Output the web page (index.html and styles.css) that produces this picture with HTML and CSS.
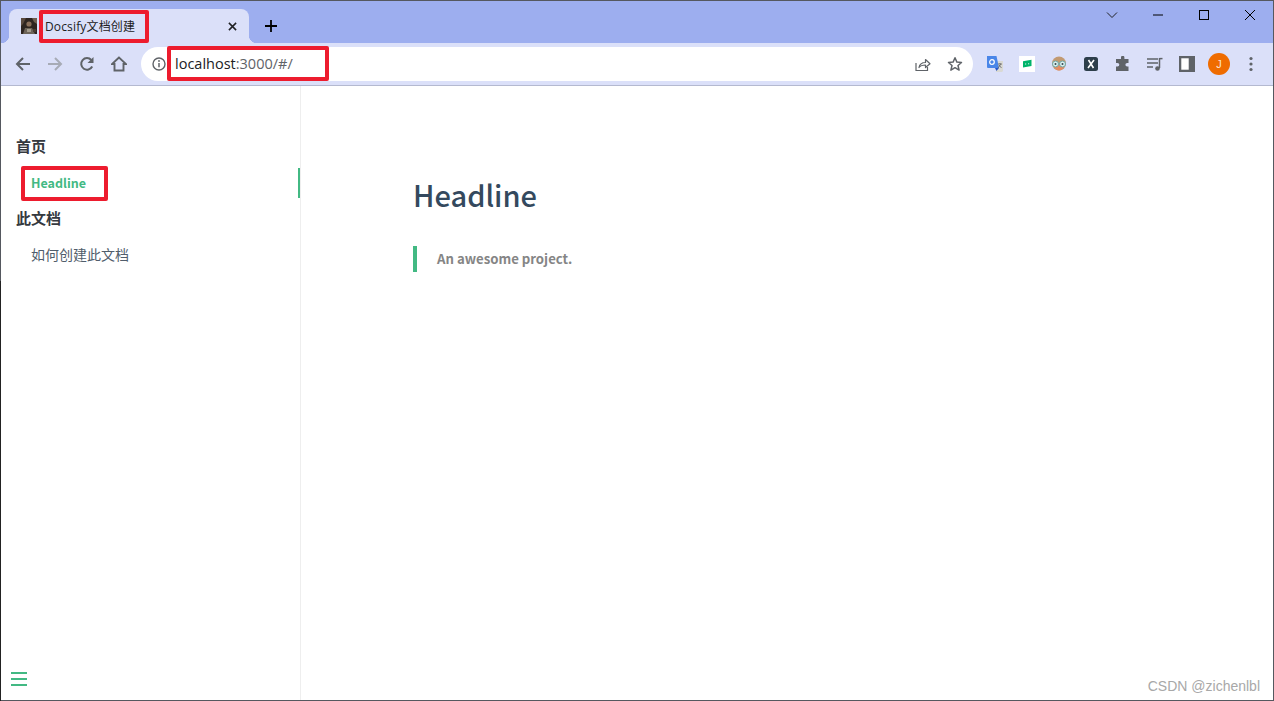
FILE: index.html
```html
<!DOCTYPE html>
<html lang="zh">
<head>
<meta charset="utf-8">
<title>Docsify文档创建</title>
<link rel="stylesheet" href="styles.css">
</head>
<body>
<div class="window">
  <header class="tabstrip">
    <div class="tab">
      <svg class="favicon" viewBox="0 0 16 16"><rect width="16" height="16" fill="#2e2520"/><path d="M0 0h5L2 6 0 8z" fill="#5a4a3e"/><path d="M11 0h5v6l-3-2z" fill="#6f5f50"/><circle cx="8" cy="6" r="2.600" fill="#8a6f5a"/><path d="M2 16l2-6h7l3 6z" fill="#6c6358"/><path d="M6 11h4v3H6z" fill="#a39b8c"/><path d="M12 11h3v3h-3z" fill="#4a3c32"/></svg>
      <span class="tab-title">Docsify文档创建</span>
      <svg class="tab-close" viewBox="0 0 10 10"><path d="M1 1l8 8M9 1l-8 8" stroke="#202124" stroke-width="1.7" fill="none"/></svg>
    </div>
    <svg class="newtab" viewBox="0 0 12 12"><path d="M6 0v12M0 6h12" stroke="#000" stroke-width="1.8" fill="none"/></svg>
    <div class="win-controls">
      <svg class="win-btn win-chevron" viewBox="0 0 12 12"><path d="M1 3.500l5 5 5-5" stroke="#202124" stroke-width="1" fill="none"/></svg>
      <svg class="win-btn win-min" viewBox="0 0 12 12"><path d="M1 6h10" stroke="#000" stroke-width="1" fill="none"/></svg>
      <svg class="win-btn win-max" viewBox="0 0 12 12"><rect x="1.500" y="1.500" width="9" height="9" stroke="#000" stroke-width="1" fill="none"/></svg>
      <svg class="win-btn win-close" viewBox="0 0 12 12"><path d="M1 1l10 10M11 1L1 11" stroke="#000" stroke-width="1" fill="none"/></svg>
    </div>
  </header>

  <nav class="toolbar">
    <div class="nav-btn"><svg viewBox="0 0 16 16"><path d="M15 8H2M8 2L2 8l6 6" stroke="#5f6368" stroke-width="2" fill="none"/></svg></div>
    <div class="nav-btn"><svg viewBox="0 0 16 16"><path d="M1 8h13M8 2l6 6-6 6" stroke="#a7abb6" stroke-width="2" fill="none"/></svg></div>
    <div class="nav-btn"><svg viewBox="0 0 16 16"><path d="M13.200 10.500A5.800 5.800 0 1 1 12.300 4" stroke="#5f6368" stroke-width="2" fill="none"/><path d="M14.500 1v6h-6z" fill="#5f6368"/></svg></div>
    <div class="nav-btn"><svg viewBox="0 0 16 16"><path d="M8 1.500L1 8h2.500v6.500h9V8H15z" stroke="#5f6368" stroke-width="1.900" fill="none" stroke-linejoin="miter"/></svg></div>
    <div class="omnibox">
      <svg class="info" viewBox="0 0 14 14"><circle cx="7" cy="7" r="6" stroke="#5f6368" stroke-width="1.400" fill="none"/><path d="M7 6v4.200" stroke="#5f6368" stroke-width="1.500"/><circle cx="7" cy="4" r=".9" fill="#5f6368"/></svg>
      <span class="url"><span class="url-host">localhost</span>:3000/#/</span>
      <svg class="omni-icon omni-share" viewBox="0 0 16 16"><path d="M1 7v7.500h11.500V11" stroke="#5f6368" stroke-width="1.200" fill="none"/><path d="M4 11.500c.6-3.500 3-5 6.500-5V3.500L15 7.700 10.500 11.500V9c-2.500 0-5 .5-6.500 2.500z" stroke="#5f6368" stroke-width="1.200" fill="none" stroke-linejoin="round"/></svg>
      <svg class="omni-icon omni-star" viewBox="0 0 16 16"><path d="M8 1.800l1.900 4.300 4.600.4-3.500 3 1.100 4.600L8 11.700l-4.100 2.400 1.100-4.600-3.500-3 4.600-.4z" stroke="#5f6368" stroke-width="1.500" fill="none" stroke-linejoin="round"/></svg>
    </div>
    <div class="ext-list">
      <div class="nav-btn"><svg viewBox="0 0 16 16"><path d="M9 5h7v10l-1 1H9z" fill="#d9d9d4"/><path d="M0 0h9.500L12 12H1a1 1 0 0 1-1-1z" fill="#4a86e8"/><circle cx="5" cy="6" r="2.300" stroke="#fff" stroke-width="1.200" fill="none"/><path d="M8 12h4l-2.500 3z" fill="#2a56c6"/><path d="M11 8h4M13 7v1M14 8l-3 4M12 9l2.500 3" stroke="#666" stroke-width=".8" fill="none"/></svg></div>
      <div class="nav-btn"><svg viewBox="0 0 16 16"><rect width="16" height="16" fill="#fff"/><path d="M4 5.200l8.500-1.400V10L4 11.400z" fill="#00b36b"/><path d="M6 8h1.200M9 7.800h1.200" stroke="#d8f5e8" stroke-width="1"/></svg></div>
      <div class="nav-btn"><svg viewBox="0 0 16 16"><circle cx="8" cy="7.500" r="7" fill="#c29a72"/><path d="M3 10c1 6 9 6 10 0l-2-2H5z" fill="#e58c63"/><circle cx="4.500" cy="8" r="3" fill="#d8efef" stroke="#6fa5a5"/><circle cx="11.500" cy="8" r="3" fill="#d8efef" stroke="#6fa5a5"/><circle cx="4.500" cy="8" r="1" fill="#37474f"/><circle cx="11.500" cy="8" r="1" fill="#37474f"/></svg></div>
      <div class="nav-btn"><svg viewBox="0 0 16 16"><rect x="1" y="1" width="14" height="14" rx="2.500" fill="#2d3e4a"/><path d="M5.500 4l5 8M11 4l-6 8" stroke="#fff" stroke-width="1.600" fill="none"/></svg></div>
      <div class="nav-btn"><svg viewBox="0 0 16 16"><path d="M6 1.500a1.700 1.700 0 0 1 3.400 0V3h4.100v4h-1.300a1.800 1.800 0 0 0 0 3.600h1.300V15H1v-4.400h1.500a1.800 1.800 0 0 0 0-3.600H1V3h5z" fill="#5f6368"/></svg></div>
      <div class="nav-btn"><svg viewBox="0 0 16 16"><path d="M0 3h11M0 7h11M0 11h6" stroke="#5f6368" stroke-width="1.500" fill="none"/><path d="M12.500 2v10" stroke="#5f6368" stroke-width="1.500"/><path d="M12.500 2.600H15.500" stroke="#5f6368" stroke-width="1.500"/><circle cx="10.500" cy="12.500" r="2.300" fill="#5f6368"/></svg></div>
      <div class="nav-btn"><svg viewBox="0 0 14 14"><path d="M0 0h14v14H0z" fill="#5f6368"/><path d="M2 2h6.500v10H2z" fill="#fff"/></svg></div>
      <div class="nav-btn"><span class="avatar">J</span></div>
      <div class="nav-btn"><svg class="dots" viewBox="0 0 4 16"><circle cx="2" cy="2.500" r="1.600" fill="#5f6368"/><circle cx="2" cy="8" r="1.600" fill="#5f6368"/><circle cx="2" cy="13.500" r="1.600" fill="#5f6368"/></svg></div>
    </div>
  </nav>

  <div class="page">
    <aside class="sidebar">
      <ul class="toc">
        <li class="toc-group">
          <span class="toc-title">首页</span>
          <a class="toc-link active">Headline</a>
        </li>
        <li class="toc-group">
          <span class="toc-title">此文档</span>
          <a class="toc-link">如何创建此文档</a>
        </li>
      </ul>
      <div class="menu-toggle"><span></span><span></span><span></span></div>
    </aside>
    <main class="content">
      <h1 class="headline">Headline</h1>
      <blockquote class="quote">An awesome project.</blockquote>
    </main>
  </div>
</div>

<div class="edge-left"></div>
<div class="mark mark-tab"></div>
<div class="mark mark-url"></div>
<div class="mark mark-nav"></div>
<div class="watermark">CSDN @zichenlbl</div>
</body>
</html>
```

FILE: styles.css
```css
* { box-sizing: border-box; }
html, body { margin: 0; height: 100%; overflow: hidden; background: #fff; }
body { position: relative; width: 1274px; height: 701px; font-family: "Noto Sans CJK SC", "Liberation Sans", sans-serif; }

.window { width: 1274px; height: 701px; border: 1px solid #55585f; display: flex; flex-direction: column; }
.edge-left { position: absolute; left: 0; top: 281px; bottom: 0; width: 1px; background: #222; }

.tabstrip { height: 42px; flex: none; background: #9daeef; display: flex; align-items: flex-end; padding-left: 8px; }
.tab { position: relative; width: 240px; height: 34px; background: #dbe0f9; border-radius: 8px 8px 0 0; display: flex; align-items: center; padding: 0 0 0 12px; }
.tab::before, .tab::after { content: ""; position: absolute; bottom: 0; width: 8px; height: 8px; }
.tab::before { left: -8px; background: radial-gradient(circle at 0 0, transparent 8px, #dbe0f9 8.500px); }
.tab::after { right: -8px; background: radial-gradient(circle at 100% 0, transparent 8px, #dbe0f9 8.500px); }
.favicon { width: 16px; height: 16px; flex: none; }
.tab-title { margin-left: 8px; font: 12px "Open Sans", "Noto Sans CJK SC", sans-serif; letter-spacing: .15px; color: #202124; white-space: nowrap; }
.tab-close { width: 9px; height: 9px; margin-left: auto; margin-right: 12px; }
.newtab { width: 12px; height: 12px; margin: 0 0 11px 16px; }

.win-controls { margin-left: auto; align-self: flex-start; display: flex; align-items: center; height: 28px; }
.win-btn { width: 12px; height: 12px; flex: none; }
.win-chevron { margin-right: 34px; }
.win-min { margin-right: 34px; }
.win-max { margin-right: 34px; }
.win-close { margin-right: 17px; }

.toolbar { height: 43px; flex: none; background: #dbe0f9; border-bottom: 1px solid #b4b9d0; display: flex; align-items: center; padding: 0 6px; }
.nav-btn { width: 32px; height: 32px; flex: none; display: flex; align-items: center; justify-content: center; }
.nav-btn svg { width: 16px; height: 16px; }
.nav-btn svg.dots { width: 4px; }

.omnibox { width: 832px; height: 34px; margin-left: 6px; background: #fff; border-radius: 17px; display: flex; align-items: center; padding-left: 11px; }
.info { width: 14px; height: 14px; flex: none; }
.url { margin-left: 9px; font: 14.500px/34px "Open Sans", sans-serif; color: #5f6368; white-space: nowrap; }
.url-host { color: #202124; }
.omni-icon { width: 16px; height: 16px; flex: none; }
.omni-share { margin-left: auto; }
.omni-star { margin-left: 16px; margin-right: 10px; }

.ext-list { display: flex; margin-left: 6px; }
.avatar { width: 22px; height: 22px; border-radius: 50%; background: #ef6c00; color: #fde6d2; font: 11px/22px "Liberation Sans", sans-serif; text-align: center; }

.page { flex: 1; min-height: 0; display: flex; }
.sidebar { position: relative; width: 300px; flex: none; border-right: 1px solid #eee; }
.toc { list-style: none; margin: 0; padding: 48px 0 0; }
.toc-group { display: flex; flex-direction: column; }
.toc-title { padding-left: 15px; font-size: 15px; font-weight: 700; line-height: 24px; color: #35393f; }
.toc-link { height: 30px; margin-top: 9px; padding-left: 30px; font-size: 14px; line-height: 30px; color: #505d6b; }
.toc-group + .toc-group { margin-top: 8px; }
.toc-link.active { margin-top: 10px; font-size: 12.500px; font-weight: 700; color: #42b983; border-right: 2px solid #42b983; }

.menu-toggle { position: absolute; left: 10px; bottom: 14px; width: 16px; display: flex; flex-direction: column; gap: 4px; }
.menu-toggle span { height: 2px; background: #42b983; }

.content { flex: 1; padding: 88px 0 0 112px; }
.headline { margin: 0; font-size: 29px; font-weight: 500; line-height: 40px; color: #34495e; }
.quote { margin: 32px 0 0; height: 26px; border-left: 4px solid #42b983; padding-left: 20px; font-size: 13.200px; font-weight: 700; line-height: 26px; color: #858585; }

.mark { position: absolute; border: 4px solid #ed1c2e; border-radius: 2px; }
.mark-tab { left: 39px; top: 10px; width: 110px; height: 33px; }
.mark-url { left: 167px; top: 46px; width: 162px; height: 35px; }
.mark-nav { left: 21px; top: 166px; width: 87px; height: 35px; }

.watermark { position: absolute; right: 14px; top: 678px; font: 14px/16px "Liberation Sans", sans-serif; color: #a8a8a8; }
```
